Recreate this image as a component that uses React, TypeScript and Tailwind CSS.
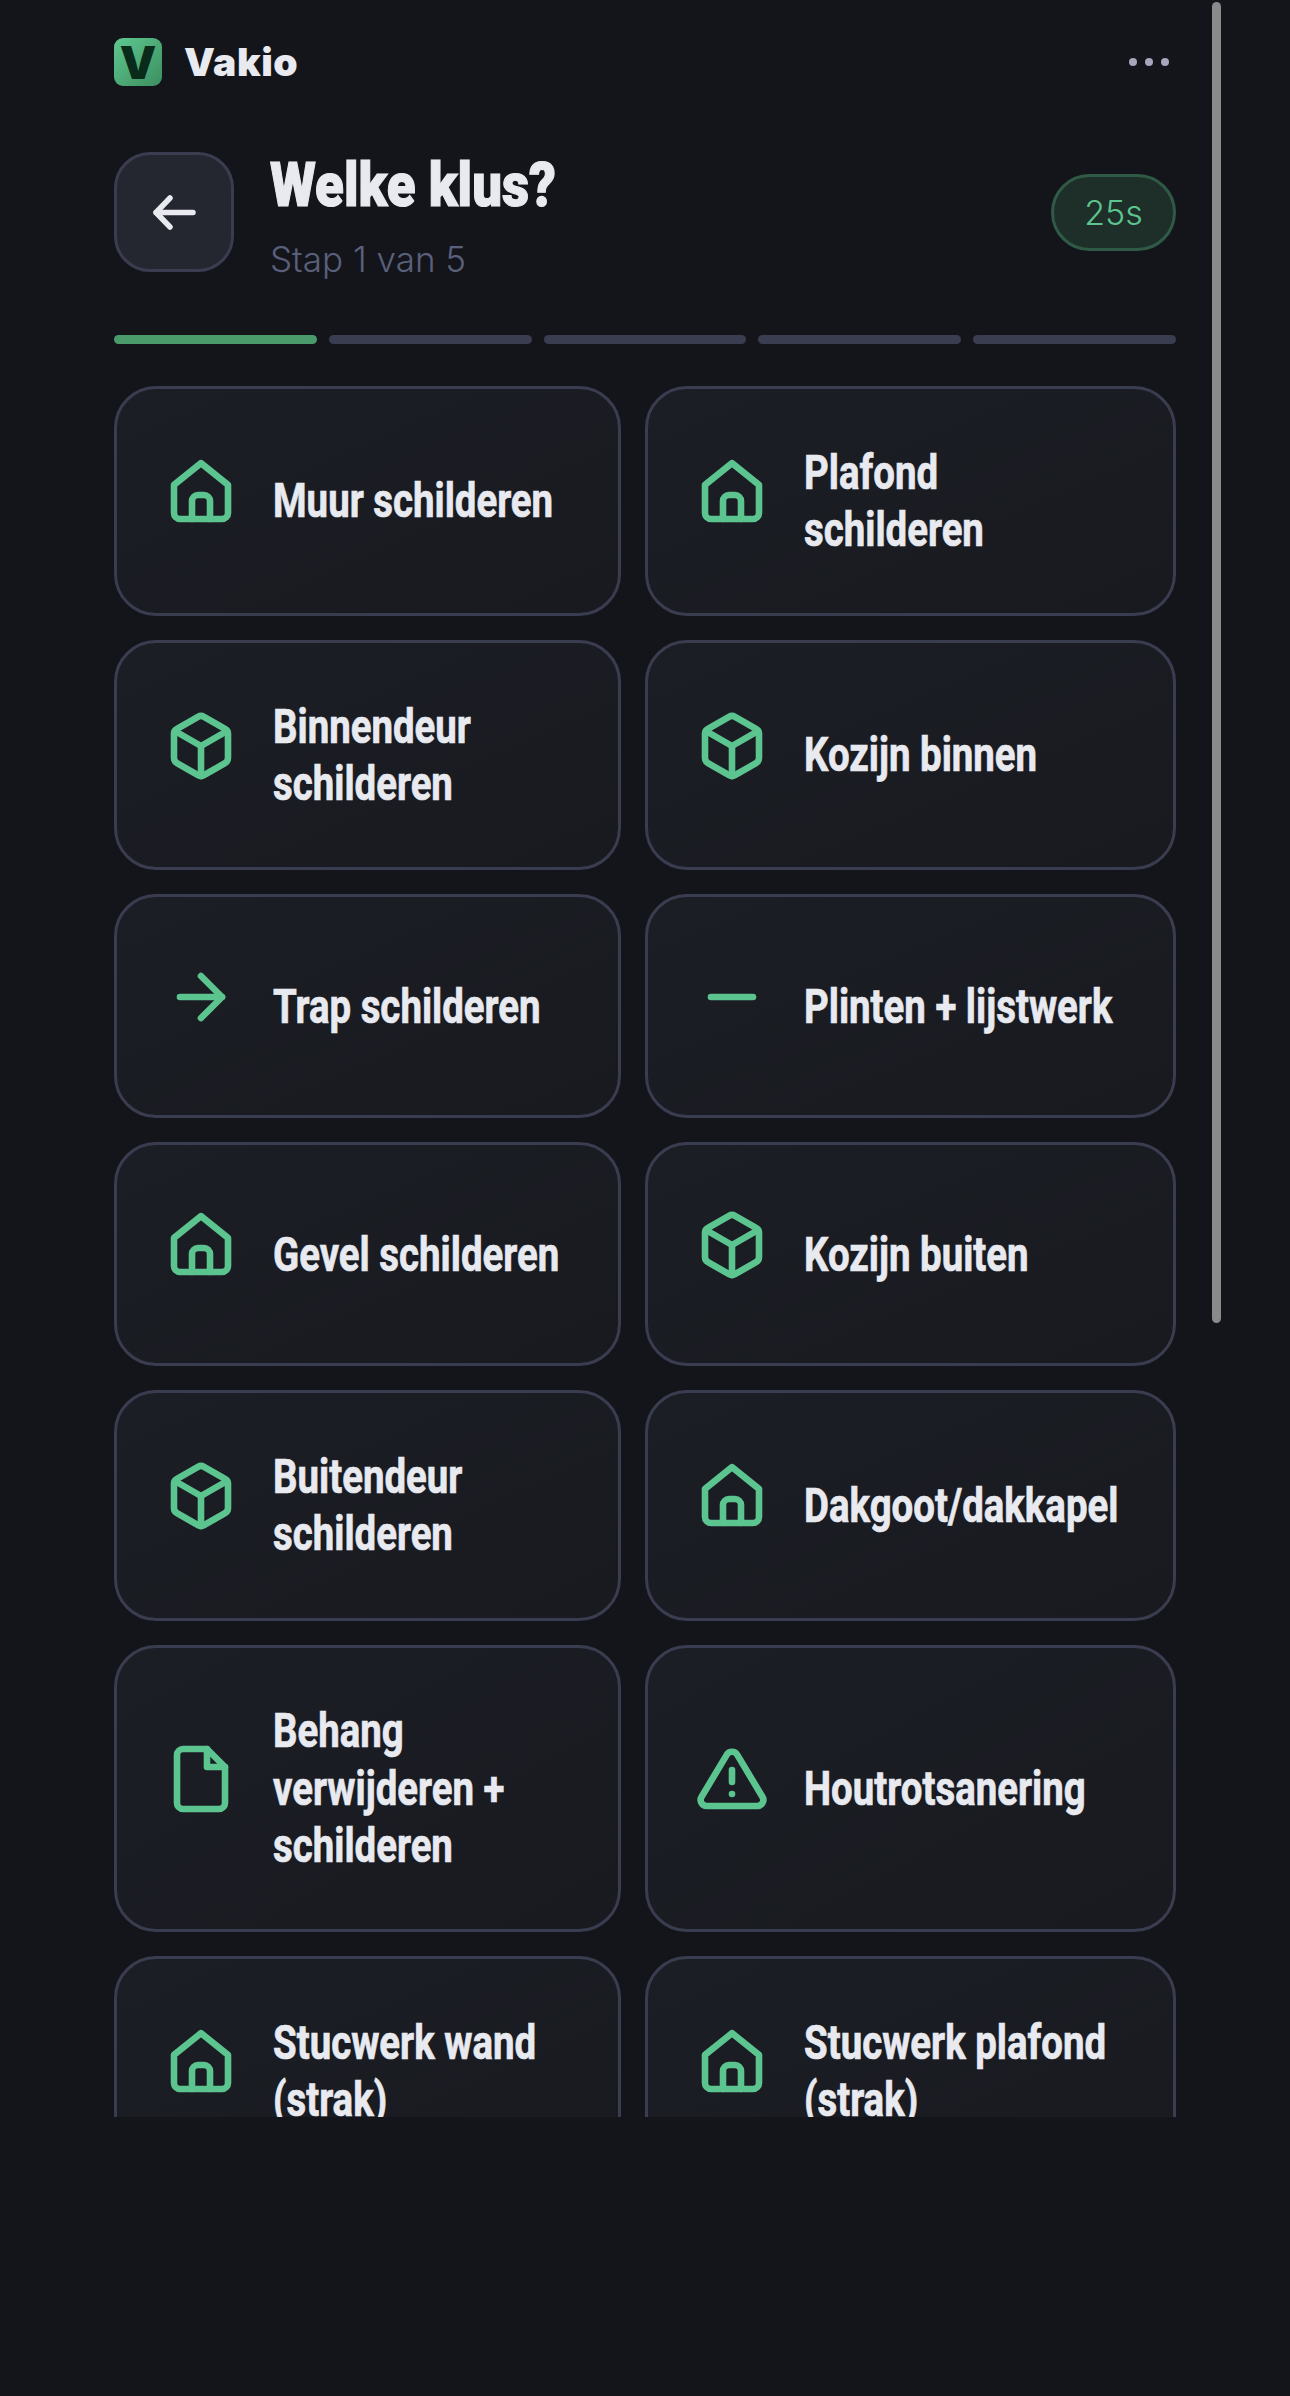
import React from "react";

type IconName = "house" | "box" | "arrow" | "minus" | "file" | "alert";

const paths: Record<IconName, string[]> = {
  house: [
    "M3 9.6 12 2.4l9 7.2V19a2 2 0 0 1-2 2H5a2 2 0 0 1-2-2z",
    "M9 21v-6a2 2 0 0 1 2-2h2a2 2 0 0 1 2 2v6",
  ],
  box: [
    "M21 16V8a2 2 0 0 0-1-1.73l-7-4a2 2 0 0 0-2 0l-7 4A2 2 0 0 0 3 8v8a2 2 0 0 0 1 1.73l7 4a2 2 0 0 0 2 0l7-4A2 2 0 0 0 21 16z",
    "M3.3 7 12 12l8.7-5",
    "M12 22V12",
  ],
  arrow: ["M5 12h14", "m12 5 7 7-7 7"],
  minus: ["M5 12h14"],
  file: ["M14 2H6a2 2 0 0 0-2 2v16a2 2 0 0 0 2 2h12a2 2 0 0 0 2-2V8z", "M14 2v6h6"],
  alert: [
    "M10.29 3.86 1.82 18a2 2 0 0 0 1.71 3h16.94a2 2 0 0 0 1.71-3L13.71 3.86a2 2 0 0 0-3.42 0z",
    "M12 9v4",
    "M12 17h.01",
  ],
};

function Icon({ name }: { name: IconName }) {
  return (
    <svg viewBox="0 0 24 24" fill="none" stroke="#5cc48f" strokeWidth="2.2" strokeLinecap="round" strokeLinejoin="round" className="w-[72px] h-[72px] shrink-0">
      {paths[name].map((d) => (
        <path key={d} d={d} />
      ))}
    </svg>
  );
}

function Card({ icon, lines }: { icon: IconName; lines: string[] }) {
  return (
    <div className="flex items-center gap-[36px] min-h-[224px] pl-[48px] pr-[12px] py-[54.5px] rounded-[42px] border-[3px] border-[#3a3c4f] bg-gradient-to-br from-[#1c1e25] to-[#181a20]">
      <div className="pb-[18px] shrink-0">
        <Icon name={icon} />
      </div>
      <div className="font-['Roboto',sans-serif] font-bold text-[48px] leading-[57.6px] text-[#e8eaf0] whitespace-nowrap scale-x-[0.8] origin-left [-webkit-text-stroke:0.7px_#e8eaf0]">
        {lines.map((l) => (
          <div key={l}>{l}</div>
        ))}
      </div>
    </div>
  );
}

const cards: { icon: IconName; lines: string[] }[] = [
  { icon: "house", lines: ["Muur schilderen"] },
  { icon: "house", lines: ["Plafond", "schilderen"] },
  { icon: "box", lines: ["Binnendeur", "schilderen"] },
  { icon: "box", lines: ["Kozijn binnen"] },
  { icon: "arrow", lines: ["Trap schilderen"] },
  { icon: "minus", lines: ["Plinten + lijstwerk"] },
  { icon: "house", lines: ["Gevel schilderen"] },
  { icon: "box", lines: ["Kozijn buiten"] },
  { icon: "box", lines: ["Buitendeur", "schilderen"] },
  { icon: "house", lines: ["Dakgoot/dakkapel"] },
  { icon: "file", lines: ["Behang", "verwijderen +", "schilderen"] },
  { icon: "alert", lines: ["Houtrotsanering"] },
  { icon: "house", lines: ["Stucwerk wand", "(strak)"] },
  { icon: "house", lines: ["Stucwerk plafond", "(strak)"] },
];

export default function App() {
  return (
    <div className="h-[2396px] bg-[#14151a]">
      <div className="relative h-[2117px] overflow-hidden">
        <div className="w-[1062px] ml-[114px] pt-[38px]">
          <div className="flex items-center justify-between pr-[7px]">
            <div className="flex items-center gap-[22px]">
              <div className="w-[48px] h-[48px] rounded-[9px] bg-gradient-to-br from-[#5fc891] to-[#3c8f60] flex items-center justify-center font-['Inter',sans-serif] font-black text-[46px] leading-none text-[#0a2a1a]">
                V
              </div>
              <div className="font-['Inter',sans-serif] font-black text-[39px] leading-[48px] tracking-[0.6px] text-[#e8eaf0]">Vakio</div>
            </div>
            <div className="flex gap-[8px]">
              <div className="w-[8px] h-[8px] rounded-full bg-[#a5a6bb]" />
              <div className="w-[8px] h-[8px] rounded-full bg-[#a5a6bb]" />
              <div className="w-[8px] h-[8px] rounded-full bg-[#a5a6bb]" />
            </div>
          </div>

          <div className="flex items-center justify-between mt-[66px]">
            <div className="flex items-center gap-[36px]">
              <div className="w-[120px] h-[120px] rounded-[36px] border-[3px] border-[#3a3c4f] bg-[#252730] flex items-center justify-center">
                <svg viewBox="0 0 48 48" fill="none" stroke="#e8eaf0" strokeWidth="5.5" strokeLinecap="round" strokeLinejoin="round" className="w-[48px] h-[48px]">
                  <path d="M43 24.5H6" />
                  <path d="M20 10 6 24.5 20 39" />
                </svg>
              </div>
              <div className="h-[120px]">
                <div className="font-['Roboto',sans-serif] font-black text-[62px] leading-[66px] text-[#e8eaf0] whitespace-nowrap scale-x-[0.852] origin-left [-webkit-text-stroke:1.2px_#e8eaf0]">Welke klus?</div>
                <div className="font-['Inter',sans-serif] font-light text-[35px] leading-[34px] mt-[24px] text-[#5a607c]">Stap 1 van 5</div>
              </div>
            </div>
            <div className="w-[125px] h-[77px] rounded-full border-[3px] border-[#2f5a45] bg-[#1e2f2a] flex items-center justify-center font-['Inter',sans-serif] font-light text-[34px] text-[#5cc48f]">
              25s
            </div>
          </div>

          <div className="flex gap-[12px] mt-[63px]">
            <div className="flex-1 h-[9px] rounded-full bg-[#4a9a6b]" />
            <div className="flex-1 h-[9px] rounded-full bg-[#3a3c4f]" />
            <div className="flex-1 h-[9px] rounded-full bg-[#3a3c4f]" />
            <div className="flex-1 h-[9px] rounded-full bg-[#3a3c4f]" />
            <div className="flex-1 h-[9px] rounded-full bg-[#3a3c4f]" />
          </div>

          <div className="grid grid-cols-[507px_531px] gap-[24px] mt-[42px]">
            {cards.map((c) => (
              <Card key={c.lines.join(" ")} icon={c.icon} lines={c.lines} />
            ))}
          </div>
        </div>
        <div className="absolute left-[1212px] top-[2px] w-[9px] h-[1321px] rounded-full bg-[#8a8a8c]" />
      </div>
    </div>
  );
}
